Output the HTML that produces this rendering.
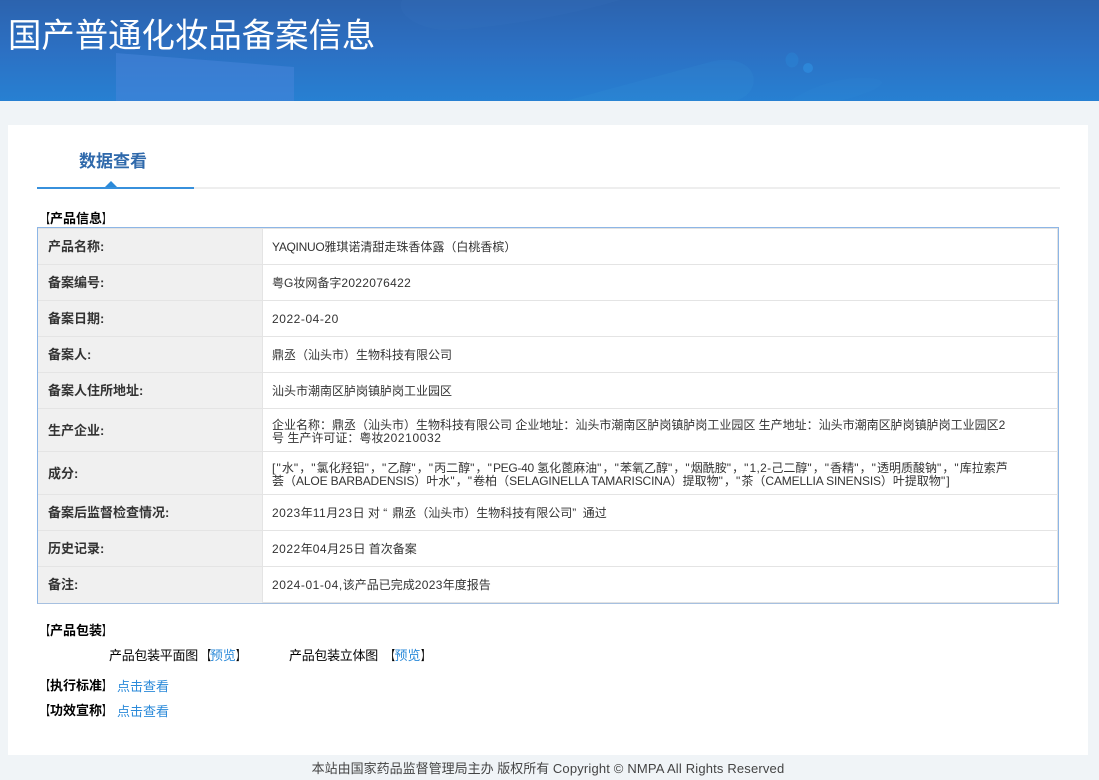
<!DOCTYPE html>
<html lang="zh-CN">
<head>
<meta charset="utf-8">
<title>国产普通化妆品备案信息</title>
<style>
*{box-sizing:border-box;margin:0;padding:0}
html,body{width:1099px;height:780px;overflow:hidden;background:#f0f4f7;font-family:"Liberation Sans","Noto Sans CJK SC",sans-serif}
.abs{position:absolute;white-space:nowrap}
#hd{position:absolute;left:0;top:0;width:1099px;height:101px;background:linear-gradient(180deg,#2c63ae 0%,#2c70c3 50%,#2780d2 100%);overflow:hidden}
#hd svg{position:absolute;left:0;top:0}
#hd h1{position:absolute;left:8px;top:13px;font-size:33.4px;line-height:48px;font-weight:400;color:#fff;white-space:nowrap}
#card{position:absolute;left:8px;top:125px;width:1080px;height:630px;background:#fff}
#tabg{position:absolute;left:37px;top:187px;width:1023px;height:2px;background:#eeeeee}
#tabb{position:absolute;left:37px;top:187px;width:157px;height:2px;background:#3790dc}
#tri{position:absolute;left:105px;top:181px;width:0;height:0;border-left:6px solid transparent;border-right:6px solid transparent;border-bottom:6px solid #2b8ad9}
#tab{left:79px;top:149px;font-size:17px;line-height:25px;font-weight:700;color:#2f69ab}
.sec{font-size:13px;line-height:18px;font-weight:700;color:#000}
#tb{position:absolute;left:37px;top:227px;width:1022px;height:377px;border:1px solid #8db6e6;border-bottom-color:#a6c0e0;box-shadow:inset 1px 1px 0 #e2e2e2,inset -1px -1px 0 #e2e2e2}
#lc{position:absolute;left:38px;top:229px;width:225px;height:374px;background:#f0f0f0;border-right:1px solid #e4e4e4}
.ln{position:absolute;left:38px;width:1020px;height:1px;background:#e4e4e4}
.l{left:48px;font-size:13px;line-height:16px;font-weight:700;color:#333}
.v{left:272px;font-size:12px;line-height:16px;color:#333}
.v2{line-height:12.5px}
.d{letter-spacing:.3px}
.e{letter-spacing:.5px}
.w{letter-spacing:.55px}
i{font-style:normal;letter-spacing:1.1px}
i.c{letter-spacing:3.2px}
i.o{letter-spacing:5px}
u{text-decoration:none;letter-spacing:-.15px}
a{text-decoration:none;color:#2b8ad9}
.t{font-size:13px;line-height:16px;color:#000}
.n{letter-spacing:-.3px}
.k,.K{display:inline-block;transform:scaleX(.65)}
.k{transform-origin:100% 50%}
.K{transform-origin:0 50%}
#ft{left:0;width:1096px;text-align:center;font-size:13px;line-height:16px;color:#444}
#ft span{letter-spacing:.17px}
</style>
</head>
<body>
<div id="hd">
<svg width="1099" height="101" viewBox="0 0 1099 101">
<path d="M116 53 L294 67 L294 101 L116 101 Z" fill="#4a86dc" fill-opacity=".5"/>
<path d="M402 0 L620 0 C560 18 490 28 450 30 C415 30 395 12 402 0 Z" fill="#5b8fd6" fill-opacity=".07"/>
<path d="M565 101 L710 62 C740 54 760 70 752 88 C748 96 740 101 730 101 Z" fill="#3a9ade" fill-opacity=".14"/>
<ellipse cx="792" cy="60" rx="6.500" ry="7.500" fill="#2b8ada" fill-opacity=".4"/>
<circle cx="808" cy="68" r="5" fill="#2f94e6" fill-opacity=".55"/>
<path d="M790 101 C820 80 860 74 880 80 C890 86 860 96 840 101 Z" fill="#3a9ade" fill-opacity=".07"/>
</svg>
<h1>国产普通化妆品备案信息</h1>
</div>
<div id="card"></div>
<div class="abs" id="tab">数据查看</div>
<div id="tabg"></div><div id="tabb"></div><div id="tri"></div>

<div class="abs sec" style="left:37px;top:210px"><span class="k">【</span>产品信息<span class="K">】</span></div>
<div id="tb"></div>
<div id="lc"></div>
<div class="ln" style="top:264px"></div>
<div class="ln" style="top:300px"></div>
<div class="ln" style="top:336px"></div>
<div class="ln" style="top:372px"></div>
<div class="ln" style="top:408px"></div>
<div class="ln" style="top:451px"></div>
<div class="ln" style="top:494px"></div>
<div class="ln" style="top:530px"></div>
<div class="ln" style="top:566px"></div>

<div class="abs l" style="top:239px">产品名称:</div>
<div class="abs l" style="top:275px">备案编号:</div>
<div class="abs l" style="top:311px">备案日期:</div>
<div class="abs l" style="top:347px">备案人:</div>
<div class="abs l" style="top:383px">备案人住所地址:</div>
<div class="abs l" style="top:423px">生产企业:</div>
<div class="abs l" style="top:466px">成分:</div>
<div class="abs l" style="top:505px">备案后监督检查情况:</div>
<div class="abs l" style="top:541px">历史记录:</div>
<div class="abs l" style="top:577px">备注:</div>

<div class="abs v" style="top:239px"><span style="letter-spacing:-.3px">YAQINUO</span>雅琪诺清甜走珠香体露（白桃香槟）</div>
<div class="abs v" style="top:275px">粤G妆网备字<span class="d">2022076422</span></div>
<div class="abs v w" style="top:311px">2022-04-20</div>
<div class="abs v" style="top:347px">鼎丞（汕头市）生物科技有限公司</div>
<div class="abs v" style="top:383px">汕头市潮南区胪岗镇胪岗工业园区</div>
<div class="abs v v2" style="top:419px">企业名称：鼎丞（汕头市）生物科技有限公司 企业地址：汕头市潮南区胪岗镇胪岗工业园区 生产地址：汕头市潮南区胪岗镇胪岗工业园区2<br>号 生产许可证：粤妆<span style="letter-spacing:.6px">20210032</span></div>
<div class="abs v v2" style="top:462px"><i>[</i><i>"</i>水<i>"</i>，<i>"</i>氯化羟铝<i>"</i>，<i>"</i>乙醇<i>"</i>，<i>"</i>丙二醇<i>"</i>，<i>"</i><u style="letter-spacing:-.3px">PEG-40</u> 氢化蓖麻油<i>"</i>，<i>"</i>苯氧乙醇<i>"</i>，<i>"</i>烟酰胺<i>"</i>，<i>"</i><span class="d">1,2-</span>己二醇<i>"</i>，<i>"</i>香精<i>"</i>，<i>"</i>透明质酸钠<i>"</i>，<i>"</i>库拉索芦<br>荟（<u>ALOE BARBADENSIS</u>）叶水<i>"</i>，<i>"</i>卷柏（<u>SELAGINELLA TAMARISCINA</u>）提取物<i>"</i>，<i>"</i>茶（<u>CAMELLIA SINENSIS</u>）叶提取物<i>"</i><i>]</i></div>
<div class="abs v" style="top:505px"><span class="e">2023</span>年<span class="e">11</span>月<span class="e">23</span>日 对 <i class="o">“</i>鼎丞（汕头市）生物科技有限公司<i class="c">”</i> 通过</div>
<div class="abs v" style="top:541px"><span class="e">2022</span>年<span class="e">04</span>月<span class="e">25</span>日 首次备案</div>
<div class="abs v" style="top:577px"><span class="w">2024-01-04,</span>该产品已完成<span class="d">2023</span>年度报告</div>

<div class="abs sec" style="left:37px;top:622px"><span class="k">【</span>产品包装<span class="K">】</span></div>
<div class="abs t" style="left:109px;top:648px"><span class="n">产品包装平面图</span><span class="k" style="margin-right:-1px">【</span><a href="#">预览</a><span class="K">】</span></div>
<div class="abs t" style="left:289px;top:648px"><span class="n">产品包装立体图</span> <span class="k">【</span><a href="#">预览</a><span class="K">】</span></div>
<div class="abs sec" style="left:37px;top:677px"><span class="k">【</span>执行标准<span class="K">】</span></div>
<a class="abs t" href="#" style="left:117px;top:679px;color:#2b8ad9">点击查看</a>
<div class="abs sec" style="left:37px;top:702px"><span class="k">【</span>功效宣称<span class="K">】</span></div>
<a class="abs t" href="#" style="left:117px;top:704px;color:#2b8ad9">点击查看</a>

<div class="abs" id="ft" style="top:761px">本站由国家药品监督管理局主办 版权所有 <span>Copyright © NMPA All Rights Reserved</span></div>
</body>
</html>
